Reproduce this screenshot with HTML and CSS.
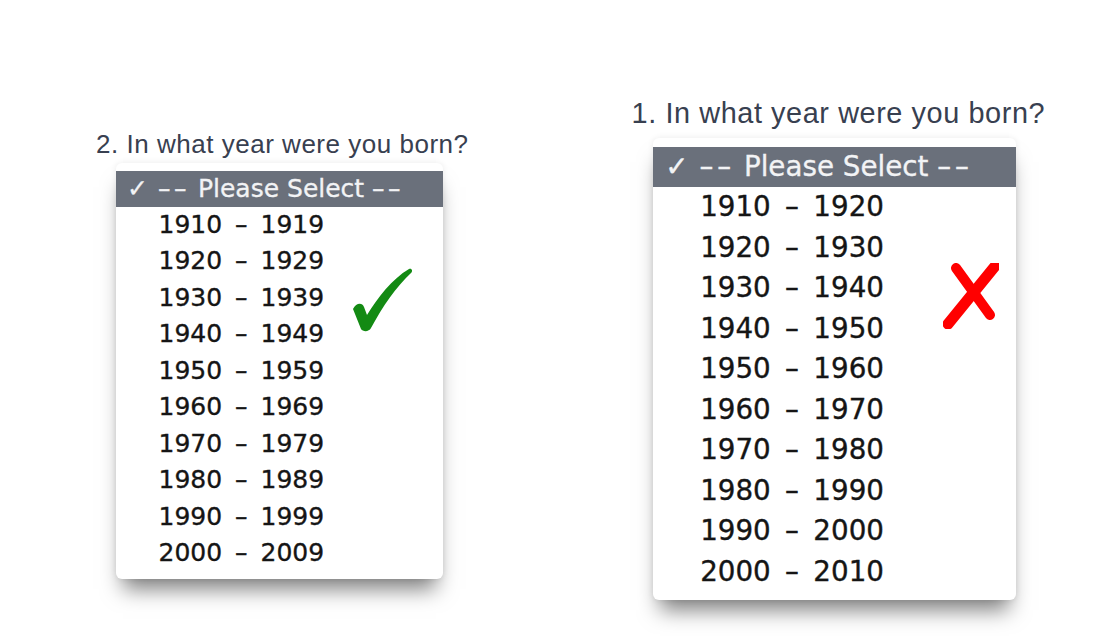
FILE: index.html
```html
<!DOCTYPE html>
<html lang="en">
<head>
<meta charset="utf-8">
<title>Birth year select</title>
<link rel="stylesheet" href="styles.css">
</head>
<body>
<main class="compare">
  <section class="panel panel-good">
    <p class="question">2. In what year were you born?</p>
    <div class="menu">
      <div class="menu-head"><span class="tick">✓</span><span class="dash">––</span> Please Select <span class="dash">––</span></div>
      <ul class="options">
        <li>1910 – 1919</li>
        <li>1920 – 1929</li>
        <li>1930 – 1939</li>
        <li>1940 – 1949</li>
        <li>1950 – 1959</li>
        <li>1960 – 1969</li>
        <li>1970 – 1979</li>
        <li>1980 – 1989</li>
        <li>1990 – 1999</li>
        <li>2000 – 2009</li>
      </ul>
      <svg class="mark mark-ok" viewBox="0 0 60 64" aria-hidden="true">
        <path d="M1 41 C4 35 10 34 12 39 L15 47 C26 29 40 11 57 1 C60 0 61 3 59 5 C44 19 31 38 19 60 C17 64 11 64 9 61 Z" fill="#138a13"/>
      </svg>
    </div>
  </section>

  <section class="panel panel-bad">
    <p class="question">1. In what year were you born?</p>
    <div class="menu">
      <div class="menu-head"><span class="tick">✓</span><span class="dash">––</span> Please Select <span class="dash">––</span></div>
      <ul class="options">
        <li>1910 – 1920</li>
        <li>1920 – 1930</li>
        <li>1930 – 1940</li>
        <li>1940 – 1950</li>
        <li>1950 – 1960</li>
        <li>1960 – 1970</li>
        <li>1970 – 1980</li>
        <li>1980 – 1990</li>
        <li>1990 – 2000</li>
        <li>2000 – 2010</li>
      </ul>
      <svg class="mark mark-no" viewBox="0 0 56 66" aria-hidden="true">
        <path d="M13 5 L47 52" stroke="#ff0000" stroke-width="10" stroke-linecap="round" fill="none"/>
        <path d="M53 2 L5 61" stroke="#ff0000" stroke-width="11" stroke-linecap="round" fill="none"/>
      </svg>
    </div>
  </section>
</main>
</body>
</html>
```

FILE: styles.css
```css
html, body {
  margin: 0;
  padding: 0;
  background: #ffffff;
}

.compare {
  display: flex;
  align-items: flex-start;
  padding-left: 96px;
  width: 1096px;
  height: 636px;
  box-sizing: border-box;
}

.panel {
  display: flex;
  flex-direction: column;
  align-items: flex-start;
}

.panel-good {
  font-size: 25px;
  padding-top: 129px;
}

.panel-bad {
  font-size: 27.75px;
  padding-top: 97px;
  margin-left: 163px;
}

.question {
  margin: 0;
  font-family: "Liberation Sans", Arial, sans-serif;
  font-size: 1.04em;
  line-height: 1.16em;
  letter-spacing: 0.02em;
  color: #384050;
  white-space: nowrap;
}

.panel-good .question { margin-bottom: 4px; }
.panel-bad .question { margin-bottom: 8px; }

.menu {
  position: relative;
  margin-left: 0.8em;
  width: 13.08em;
  padding: 0.32em 0 0.3em;
  background: #ffffff;
  border-radius: 6px;
  box-shadow: 0 17px 20px -7px rgba(0, 0, 0, 0.5), 0 0 6px rgba(0, 0, 0, 0.08);
  font-family: "DejaVu Sans", Verdana, sans-serif;
}

.panel-bad .menu {
  margin-left: 0.77em;
}

.menu-head {
  height: 1.43em;
  line-height: 1.43em;
  padding-left: 0.44em;
  background: #6a707b;
  color: #f2f3f5;
  white-space: nowrap;
  -webkit-text-stroke: 0.3px #f2f3f5;
}

.tick {
  display: inline-block;
  width: 1.24em;
}

.dash {
  letter-spacing: 0.14em;
}

.options {
  list-style: none;
  margin: 0;
  padding: 0;
}

.options li {
  height: 1.46em;
  line-height: 1.46em;
  padding-left: 1.7em;
  color: #151515;
  word-spacing: 0.2em;
  white-space: nowrap;
  -webkit-text-stroke: 0.35px #151515;
}

.mark {
  position: absolute;
}

.mark-ok {
  left: 236px;
  top: 105px;
  width: 60px;
  height: 64px;
}

.mark-no {
  left: 290px;
  top: 125px;
  width: 56px;
  height: 66px;
}
```
